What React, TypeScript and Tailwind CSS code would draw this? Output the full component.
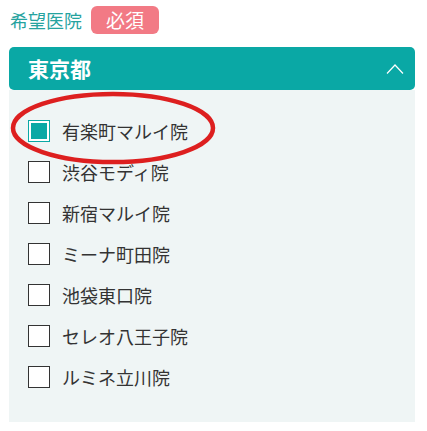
import React from "react";

const items = [
  { label: "有楽町マルイ院", checked: true },
  { label: "渋谷モディ院", checked: false },
  { label: "新宿マルイ院", checked: false },
  { label: "ミーナ町田院", checked: false },
  { label: "池袋東口院", checked: false },
  { label: "セレオ八王子院", checked: false },
  { label: "ルミネ立川院", checked: false },
];

export default function App() {
  return (
    <div
      className="relative w-[427px] h-[431px] bg-white"
      style={{ fontFamily: '"Noto Sans CJK JP", "Noto Sans", sans-serif' }}
    >
      <div className="flex items-center pl-[10px] pt-[6px] h-[28px] box-content">
        <span className="text-[18px] leading-none text-[#26a39f]">希望医院</span>
        <span className="ml-[9px] h-[28px] px-[15px] rounded-[6px] bg-[#f27a85] text-white text-[19px] leading-[28px]">
          必須
        </span>
      </div>
      <div className="mx-[9px] mt-[13px] w-[406px]">
        <div className="h-[43px] rounded-[5px] bg-[#0aa8a5] flex items-center justify-between pl-[19px] pr-[11px]">
          <span className="text-white font-bold text-[21px] leading-none">東京都</span>
          <svg width="18" height="12" viewBox="0 0 18 12" fill="none">
            <path d="M1 10.5 L9 2 L17 10.5" stroke="white" strokeWidth="1.2" />
          </svg>
        </div>
        <div className="bg-[#eff5f5] pt-[20px] pb-[25px] pl-[19px]">
          {items.map((it) => (
            <div key={it.label} className="h-[41px] flex items-center">
              {it.checked ? (
                <span className="w-[22px] h-[22px] border border-[#0aa8a5] bg-white p-[2px] box-border">
                  <span className="block w-full h-full bg-[#0aa8a5]" />
                </span>
              ) : (
                <span className="w-[22px] h-[22px] border border-[#333] bg-white box-border" />
              )}
              <span className="ml-[12px] text-[18px] leading-none text-[#333]">{it.label}</span>
            </div>
          ))}
        </div>
      </div>
      <svg
        className="absolute left-0 top-0 pointer-events-none"
        width="427"
        height="431"
      >
        <ellipse
          cx="113"
          cy="128"
          rx="100"
          ry="34"
          fill="none"
          stroke="#dd1f1f"
          strokeWidth="4.5"
        />
      </svg>
    </div>
  );
}
